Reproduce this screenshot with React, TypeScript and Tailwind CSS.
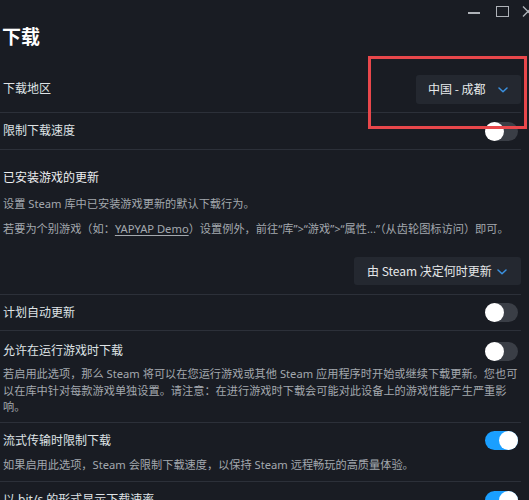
import React from 'react';

const font = { fontFamily: '"Noto Sans", "Noto Sans CJK SC", sans-serif' };
const cjkFont = { fontFamily: '"Noto Sans CJK SC", sans-serif' };

function Toggle({ on }: { on?: boolean }) {
  return (
    <div
      className={`relative w-[33px] h-[19px] rounded-full mr-[3px] flex-shrink-0 ${
        on ? 'bg-[#1a9fff]' : 'bg-[#3a3e46]'
      }`}
    >
      <div
        className={`absolute top-0 w-[19px] h-[19px] rounded-full bg-white ${
          on ? 'right-0' : 'left-0'
        }`}
      />
    </div>
  );
}

function Chevron() {
  return (
    <svg width="10" height="6" viewBox="0 0 10 6" fill="none" className="mt-[2px]">
      <path d="M1 1L5 4.8L9 1" stroke="#3b91e0" strokeWidth="1.5" strokeLinecap="round" strokeLinejoin="round" />
    </svg>
  );
}

function Dropdown({ label, className }: { label: string; className: string }) {
  return (
    <div className={`flex items-center justify-between rounded-[3px] bg-[#242830] ${className}`}>
      <span className="text-[12px] leading-none text-[#e6e8ea]" style={cjkFont}>
        {label}
      </span>
      <Chevron />
    </div>
  );
}

export default function App() {
  return (
    <div className="relative w-full h-[500px] overflow-hidden bg-[#191c23] text-[#dfe3e6]" style={font}>
      {/* Window controls */}
      <div className="flex justify-end items-start h-[24px] pt-[6px] text-[#b8bcc2]">
        <div className="w-[12px] h-[1.5px] bg-[#aeb2b8] mt-[6px] mr-[16px]" />
        <div className="w-[13px] h-[11px] border-[1.5px] border-[#aeb2b8] mr-[13px]" />
        <svg width="12" height="11" viewBox="0 0 12 11" className="-mr-[5px]">
          <path d="M1 0.5L11 10.5M11 0.5L1 10.5" stroke="#aeb2b8" strokeWidth="1.4" />
        </svg>
      </div>

      <h1 className="pl-[2px] text-[19px] leading-[26px] font-bold text-white mb-[16px]">下载</h1>

      <div className="mr-[8px]">
        {/* 下载地区 */}
        <div className="flex items-center justify-between h-[47px] border-b border-[#2c3039] pl-[3px]">
          <span className="text-[12px]">下载地区</span>
          <Dropdown label="中国 - 成都" className="w-[105px] h-[29px] pl-[12px] pr-[13px]" />
        </div>

        {/* 限制下载速度 */}
        <div className="flex items-center justify-between h-[37px] border-b border-[#2c3039] pl-[3px]">
          <span className="text-[12px]">限制下载速度</span>
          <Toggle />
        </div>

        {/* 已安装游戏的更新 */}
        <div className="pt-[18px] pb-[9px] border-b border-[#2c3039] pl-[3px]">
          <div className="text-[12px] leading-[20px] text-[#eceef0]">已安装游戏的更新</div>
          <div className="mt-[7px] text-[11.2px] leading-[18px] text-[#a3a8ae]">
            设置 Steam 库中已安装游戏更新的默认下载行为。
          </div>
          <div className="mt-[7px] text-[11.2px] leading-[18px] text-[#a3a8ae] whitespace-nowrap">
            若要为个别游戏（如：<span className="underline underline-offset-2">YAPYAP Demo</span>）设置例外，前往“库”&gt;“游戏”&gt;“属性...”（从齿轮图标访问）即可。
          </div>
          <div className="flex justify-end mt-[19px]">
            <Dropdown label="由 Steam 决定何时更新" className="w-[167px] h-[28px] pl-[13px] pr-[14px]" />
          </div>
        </div>

        {/* 计划自动更新 */}
        <div className="flex items-center justify-between h-[36px] border-b border-[#2c3039] pl-[3px]">
          <span className="text-[12px]">计划自动更新</span>
          <Toggle />
        </div>

        {/* 允许在运行游戏时下载 */}
        <div className="pt-[10px] pb-[6px] border-b border-[#2c3039] pl-[3px]">
          <div className="flex items-center justify-between h-[20px]">
            <span className="text-[12px]">允许在运行游戏时下载</span>
            <Toggle />
          </div>
          <p className="mt-[5px] text-[11.2px] leading-[16.5px] text-[#a3a8ae]">
            若启用此选项，那么 Steam 将可以在您运行游戏或其他 Steam 应用程序时开始或继续下载更新。您也可
            <br />
            以在库中针对每款游戏单独设置。请注意：在进行游戏时下载会可能对此设备上的游戏性能产生严重影
            <br />
            响。
          </p>
        </div>

        {/* 流式传输时限制下载 */}
        <div className="pt-[8px] pb-[8px] border-b border-[#2c3039] pl-[3px]">
          <div className="flex items-center justify-between h-[20px]">
            <span className="text-[12px]">流式传输时限制下载</span>
            <Toggle on />
          </div>
          <p className="mt-[6px] text-[11.2px] leading-[16.5px] text-[#a3a8ae]">
            如果启用此选项，Steam 会限制下载速度，以保持 Steam 远程畅玩的高质量体验。
          </p>
        </div>

        {/* 以 bit/s 的形式显示下载速率 */}
        <div className="pt-[8px] pl-[3px]">
          <div className="flex items-center justify-between h-[20px]">
            <span className="text-[12px]">以 bit/s 的形式显示下载速率</span>
            <Toggle on />
          </div>
        </div>
      </div>

      {/* Annotation highlight */}
      <div className="absolute left-[368px] top-[56px] w-[159px] h-[73px] border-[3px] border-[#e8474b]" />
    </div>
  );
}
